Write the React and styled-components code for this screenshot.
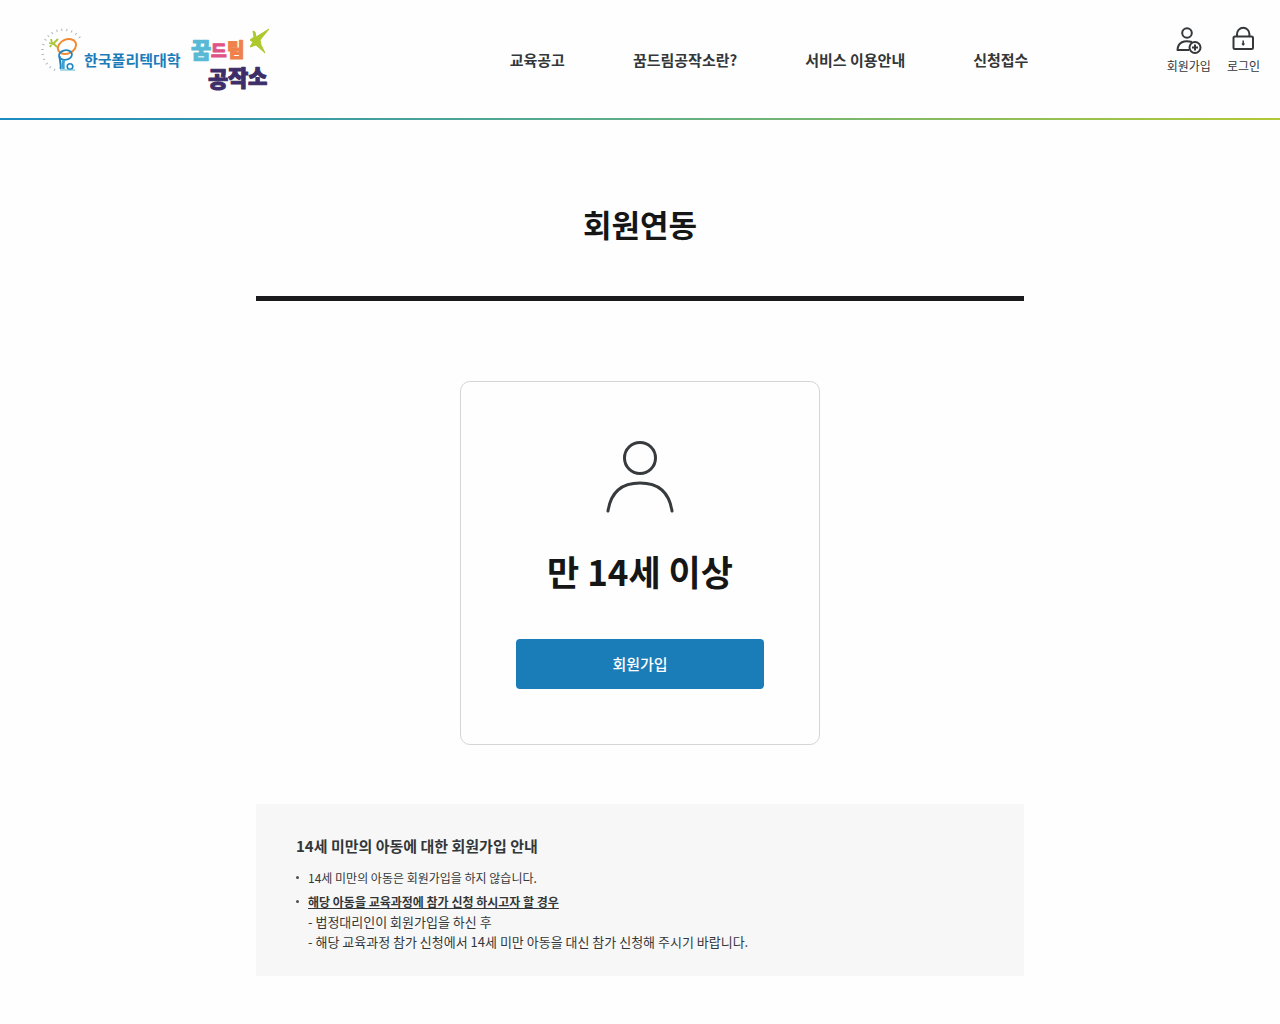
import React from 'react';
import styled, { createGlobalStyle } from 'styled-components';

const GlobalStyle = createGlobalStyle`
  * {
    box-sizing: border-box;
  }

  body {
    margin: 0;
    background-color: #fefefe;
    color: #333739;
    font-family: 'Noto Sans CJK KR', 'Noto Sans', sans-serif;
  }

  h1, h2, h3, p, ul {
    margin: 0;
    padding: 0;
  }

  ul {
    list-style: none;
  }

  a {
    color: inherit;
    text-decoration: none;
  }
`;

/* Header */
const HeaderWrapper = styled.header`
  display: grid;
  grid-template-columns: 29% 1fr auto;
  min-height: 120px;
  padding-right: 20px;
  border-bottom: 2px solid;
  border-image: linear-gradient(90deg, #1b8bc1, #5fae86 50%, #b3c935) 1;
`;

const LogoArea = styled.div`
  display: flex;
  align-items: flex-start;
  gap: 8px;
  padding: 24px 0 0 36px;
`;

const PolyLogo = styled.a`
  display: flex;
  align-items: center;
  color: #1b7cba;
  font-size: 15px;
  font-weight: 700;
  line-height: 24px;
  white-space: nowrap;

  span {
    padding-top: 22px;
  }
`;

const Nav = styled.nav`
  display: flex;
  justify-content: center;
  gap: 68px;
  padding: 48px 0 0 6px;
`;

const NavLink = styled.a`
  font-size: 15px;
  font-weight: 700;
  line-height: 24px;
  white-space: nowrap;
`;

const UserMenu = styled.div`
  display: flex;
  align-items: flex-start;
  gap: 16px;
  padding-top: 24px;
`;

const UserLink = styled.a`
  display: flex;
  flex-direction: column;
  align-items: center;
  font-size: 12px;
  line-height: 20px;

  svg {
    display: block;
    margin-bottom: 1px;
  }
`;

/* Contents */
const Main = styled.main`
  width: 100%;
  max-width: 768px;
  margin: 0 auto;
  padding: 80px 0 48px;
`;

const PageTitle = styled.h1`
  padding-bottom: 48px;
  border-bottom: 5px solid #1a1a1c;
  color: #161616;
  font-size: 31px;
  font-weight: 700;
  line-height: 48px;
  text-align: center;
`;

const JoinCard = styled.section`
  display: flex;
  flex-direction: column;
  align-items: center;
  width: 100%;
  max-width: 360px;
  margin: 80px auto 59px;
  padding: 56px 55px 55px;
  border: 1px solid #d5d5d5;
  border-radius: 10px;
`;

const JoinTitle = styled.h2`
  margin: 30px 0 41px;
  color: #161616;
  font-size: 35px;
  font-weight: 700;
  line-height: 54px;
`;

const JoinButton = styled.button`
  width: 100%;
  height: 50px;
  padding: 0 0 2px;
  border: 0;
  border-radius: 4px;
  background-color: #1a7db8;
  color: #fff;
  font-family: inherit;
  font-size: 15px;
  font-weight: 500;
  cursor: pointer;
`;

const Notice = styled.section`
  padding: 30px 40px 24px;
  background-color: #f7f7f7;
`;

const NoticeTitle = styled.h3`
  margin-bottom: 10px;
  font-size: 15px;
  font-weight: 700;
  line-height: 24px;
`;

const NoticeItem = styled.li`
  display: flex;
  gap: 9px;
  font-size: 12px;
  line-height: 20px;

  & + & {
    margin-top: 4px;
  }

  &::before {
    content: '';
    flex: none;
    width: 3px;
    height: 3px;
    margin-top: 8px;
    border-radius: 50%;
    background-color: #4a4e50;
  }
`;

const Underline = styled.strong`
  font-weight: 700;
  text-decoration: underline;
  text-underline-offset: 1px;
`;

const NoticeDetail = styled.p`
  font-size: 13px;
  line-height: 20px;
`;

const LogoLetter = styled.text`
  font-weight: 900;
  stroke-linejoin: round;
`;

const PolyMark = () => (
  <svg width="48" height="50" viewBox="0 0 48 50" fill="none" aria-hidden="true">
    <path
      d="M19 46A21 21 0 1 1 46 17"
      stroke="#a9b6c2"
      strokeWidth="2.4"
      strokeDasharray="1 4"
    />
    <path d="M15 15l1 4M13 19l4 1 5-5M17 19l4 4M16 19l-2 4" stroke="#a9c636" strokeWidth="1.8" />
    <ellipse
      cx="31"
      cy="22.5"
      rx="9.5"
      ry="7"
      transform="rotate(-25 31 22.5)"
      stroke="#ef8a36"
      strokeWidth="2"
    />
    <ellipse
      cx="29.5"
      cy="31"
      rx="6.5"
      ry="4.8"
      transform="rotate(-10 29.5 31)"
      stroke="#2186c0"
      strokeWidth="1.8"
    />
    <path d="M23.5 32c0 5 2 8 1 13" stroke="#2186c0" strokeWidth="2" />
    <path d="M28 36c-2 3 0 6-1 9" stroke="#3da3d0" strokeWidth="3" />
    <circle cx="34" cy="42.5" r="2.8" stroke="#2186c0" strokeWidth="1.6" />
    <path d="M24 46h15" stroke="#55b9d2" strokeWidth="1" />
  </svg>
);

const dreamLetters = [
  { text: '꿈', x: 2, y: 34, size: 22, color: '#58b9d5' },
  { text: '드', x: 22, y: 33, size: 17, color: '#df5487' },
  { text: '림', x: 38, y: 33, size: 19, color: '#ef824c' },
  { text: '공', x: 19, y: 63, size: 22, color: '#3d2e69' },
  { text: '작', x: 39, y: 62, size: 22, color: '#3d2e69' },
  { text: '소', x: 59, y: 60, size: 21, color: '#3d2e69' },
];

const DreamLogo = () => (
  <svg width="80" height="70" viewBox="0 0 80 70" role="img" aria-label="꿈드림공작소">
    {dreamLetters.map(({ text, x, y, size, color }) => (
      <LogoLetter
        key={text}
        x={x}
        y={y}
        fontSize={size}
        fill={color}
        stroke={color}
        strokeWidth="1"
      >
        {text}
      </LogoLetter>
    ))}
    <path
      d="M64 7l2 1 1 5 13-8-9 11 1 5 4 8-9-8-6 2 3-5-3-2 4-3z"
      fill="#acc92d"
      stroke="#acc92d"
      strokeWidth="1"
      strokeLinejoin="round"
    />
  </svg>
);

const JoinIcon = () => (
  <svg width="28" height="31" viewBox="0 0 28 31" fill="none" stroke="#34383b" strokeWidth="2">
    <circle cx="12" cy="9" r="4.8" />
    <path d="M17 18c-8-2-14 0-14.5 8H14" strokeLinejoin="round" />
    <circle cx="20" cy="23.5" r="5.5" />
    <path d="M17 23.5h6M20 20.5v6" />
  </svg>
);

const LoginIcon = () => (
  <svg width="28" height="31" viewBox="0 0 28 31" fill="none" stroke="#34383b" strokeWidth="2">
    <rect x="4.5" y="12.5" width="19.5" height="12.5" rx="1.5" />
    <path d="M8 12.5V10a6.2 6.2 0 0 1 12.4 0v2.5" />
    <path d="M14.2 16.5v5M12.8 20h2.8" strokeWidth="1.5" />
  </svg>
);

const PersonIcon = () => (
  <svg width="70" height="76" viewBox="0 0 70 76" fill="none" stroke="#383b3d" strokeWidth="3">
    <circle cx="35" cy="20" r="15.5" />
    <path d="M3 73C6 53 18 45 35 45s29 8 32 28" strokeLinecap="round" />
  </svg>
);

const menus = ['교육공고', '꿈드림공작소란?', '서비스 이용안내', '신청접수'];

const App = () => {
  return (
    <>
      <GlobalStyle />
      <HeaderWrapper>
        <LogoArea>
          <PolyLogo href="#poly">
            <PolyMark />
            <span>한국폴리텍대학</span>
          </PolyLogo>
          <a href="#home">
            <DreamLogo />
          </a>
        </LogoArea>
        <Nav>
          {menus.map((menu) => (
            <NavLink href="#menu" key={menu}>
              {menu}
            </NavLink>
          ))}
        </Nav>
        <UserMenu>
          <UserLink href="#join">
            <JoinIcon />
            회원가입
          </UserLink>
          <UserLink href="#login">
            <LoginIcon />
            로그인
          </UserLink>
        </UserMenu>
      </HeaderWrapper>

      <Main>
        <PageTitle>회원연동</PageTitle>
        <JoinCard>
          <PersonIcon />
          <JoinTitle>만 14세 이상</JoinTitle>
          <JoinButton type="button">회원가입</JoinButton>
        </JoinCard>
        <Notice>
          <NoticeTitle>14세 미만의 아동에 대한 회원가입 안내</NoticeTitle>
          <ul>
            <NoticeItem>14세 미만의 아동은 회원가입을 하지 않습니다.</NoticeItem>
            <NoticeItem>
              <div>
                <Underline>해당 아동을 교육과정에 참가 신청 하시고자 할 경우</Underline>
                <NoticeDetail>- 법정대리인이 회원가입을 하신 후</NoticeDetail>
                <NoticeDetail>
                  - 해당 교육과정 참가 신청에서 14세 미만 아동을 대신 참가 신청해 주시기 바랍니다.
                </NoticeDetail>
              </div>
            </NoticeItem>
          </ul>
        </Notice>
      </Main>
    </>
  );
};

export default App;
